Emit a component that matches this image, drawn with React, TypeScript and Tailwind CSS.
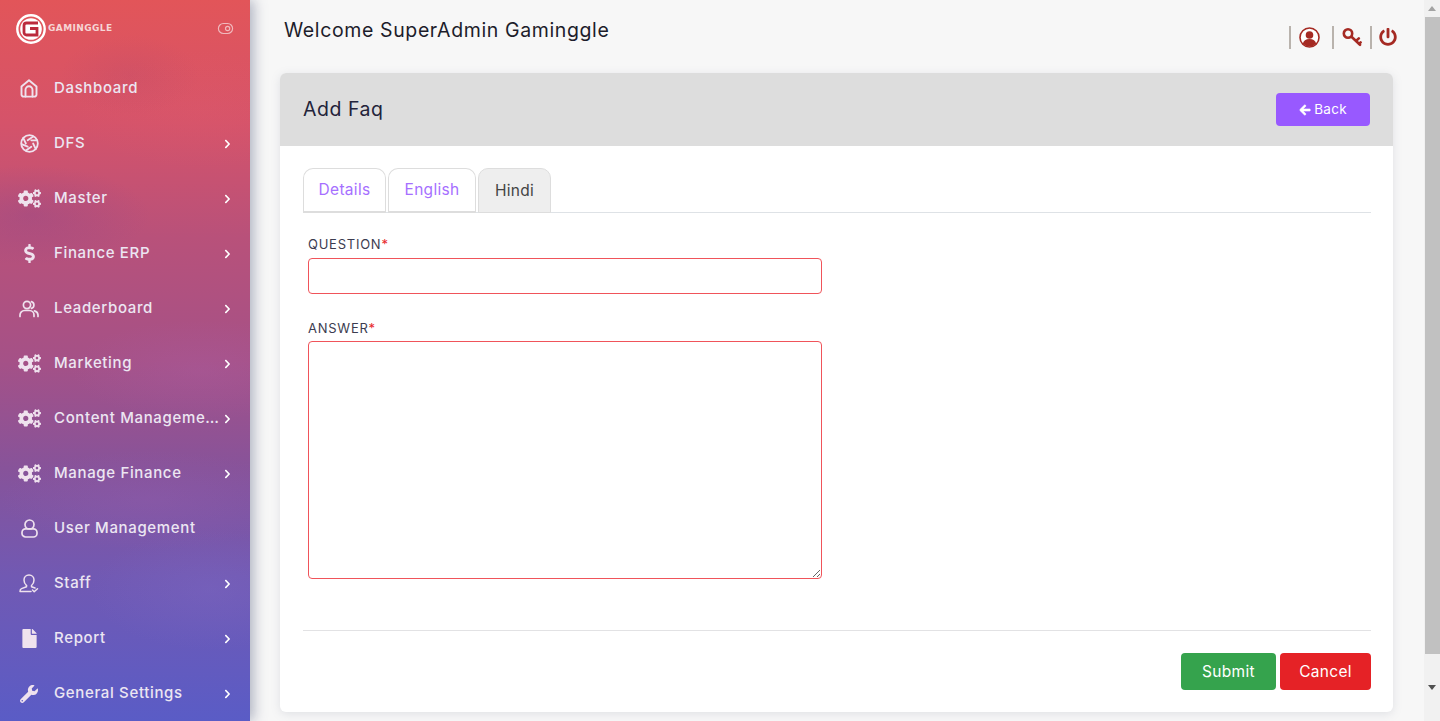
import React from "react";
import { FaCogs, FaDollarSign, FaFile, FaWrench, FaChevronRight, FaPowerOff, FaArrowLeft } from "react-icons/fa";
import { ToggleRight } from "lucide-react";

const Cogs = () => <FaCogs className="w-[23px] h-[23px] shrink-0" />;
const ApertureI = () => (
  <svg width="19" height="19" viewBox="0 0 24 24" fill="none" stroke="currentColor" strokeWidth="2.300" strokeLinecap="round">
    <circle cx="12" cy="12" r="10.500" />
    <path d="M14.300 8h7.100M9.700 8l7.050-4.700M7.400 12 4 5M9.700 16 2.700 13M14.300 16l-6.800 4.700M16.600 12l3.400 7" />
  </svg>
);
const HomeI = () => (
  <svg width="18" height="19" viewBox="0 0 18 19" fill="none" stroke="currentColor" strokeWidth="1.900" strokeLinejoin="round" strokeLinecap="round">
    <path d="M1.500 7.400 9 1.300l7.500 6.100v8a2.200 2.200 0 0 1-2.200 2.200H3.700a2.200 2.200 0 0 1-2.200-2.200z" />
    <path d="M5.500 17.600V10.800a3.500 3.500 0 0 1 7 0v6.800" />
  </svg>
);
const UsersI = () => (
  <svg width="20" height="18" viewBox="0 0 20 18" fill="none" stroke="currentColor" strokeWidth="1.700" strokeLinecap="round">
    <circle cx="8" cy="5" r="3.600" />
    <path d="M1 16.500v-1.500a4.500 4.500 0 0 1 4.500-4.500h5a4.500 4.500 0 0 1 4.500 4.500v1.500" />
    <path d="M12.500 1.600a3.600 3.600 0 0 1 0 6.800M15.500 10.800a4.500 4.500 0 0 1 3.500 4.200v1.500" />
  </svg>
);
const UserI = () => (
  <svg width="17" height="19" viewBox="0 0 17 19" fill="none" stroke="currentColor" strokeWidth="1.700">
    <circle cx="8.500" cy="5.500" r="4.500" />
    <rect x="1" y="9.800" width="15" height="8.200" rx="3.600" />
  </svg>
);
const StaffI = () => (
  <svg width="20" height="19" viewBox="0 0 20 19" fill="none" stroke="currentColor" strokeWidth="1.500" strokeLinecap="round" strokeLinejoin="round">
    <path d="M10 1c3 0 5 2.200 5 5 0 2.600-1.200 4.500-2.500 5.500v1.200l3.500 1.300M7.500 11.500C6.200 10.500 5 8.600 5 6c0-2.800 2-5 5-5" />
    <path d="M7.500 11.500v1.200l-5 1.900c-1 .4-1.500 1.200-1.500 2.900h11" />
    <path d="m13.500 16 1.700 1.700 3.300-3" />
  </svg>
);
const KeyI = () => (
  <svg width="20" height="20" viewBox="0 0 20 20" fill="none" stroke="#a52a23" strokeWidth="2.600" strokeLinecap="round">
    <circle cx="6" cy="6.500" r="4.200" />
    <path d="m9.500 9.800 8.500 8M14 14l2.800-2.600M17 17l1.600-1.600" />
  </svg>
);
const ProfileI = () => (
  <svg width="21" height="21" viewBox="0 0 21 21">
    <circle cx="10.500" cy="10.500" r="9.500" fill="#fff" stroke="#a52a23" strokeWidth="1.600" />
    <circle cx="10.500" cy="8" r="3.800" fill="#a52a23" />
    <path d="M3.800 16.800c.6-3.300 3-4.800 6.700-4.800s6.100 1.500 6.700 4.800a9.500 9.500 0 0 1-13.400 0z" fill="#a52a23" />
  </svg>
);

const Logo = () => (
  <svg width="30" height="30" viewBox="0 0 30 30" className="shrink-0">
    <circle cx="15" cy="15" r="13.700" fill="none" stroke="#fff" strokeWidth="2.400" />
    <circle cx="15" cy="15" r="10.800" fill="#fff" />
    <path d="M22 9H10.500a2.500 2.500 0 0 0-2.500 2.500v7a2.500 2.500 0 0 0 2.500 2.500H21v-6.500h-7" fill="none" stroke="#bb2a3c" strokeWidth="2.800" />
  </svg>
);

const items: { label: string; icon: React.ReactNode; chevron?: boolean }[] = [
  { label: "Dashboard", icon: <HomeI /> },
  { label: "DFS", icon: <ApertureI />, chevron: true },
  { label: "Master", icon: <Cogs />, chevron: true },
  { label: "Finance ERP", icon: <FaDollarSign className="w-[19px] h-[19px]" />, chevron: true },
  { label: "Leaderboard", icon: <UsersI />, chevron: true },
  { label: "Marketing", icon: <Cogs />, chevron: true },
  { label: "Content Manageme…", icon: <Cogs />, chevron: true },
  { label: "Manage Finance", icon: <Cogs />, chevron: true },
  { label: "User Management", icon: <UserI /> },
  { label: "Staff", icon: <StaffI />, chevron: true },
  { label: "Report", icon: <FaFile className="w-[17px] h-[19px]" />, chevron: true },
  { label: "General Settings", icon: <FaWrench className="w-[18px] h-[18px]" />, chevron: true },
];

const Sep = () => <span className="w-[2px] h-[23px] bg-[#b9b3ad] block shrink-0" />;

export default function App() {
  return (
    <div className="flex h-[721px] w-[1440px] overflow-hidden bg-[#f7f7f7] font-['Inter','Liberation_Sans',sans-serif] text-[#2b2b3d]">
      <aside className="relative z-10 w-[250px] h-full shrink-0 flex flex-col bg-[radial-gradient(ellipse_70px_40px_at_130px_75px,rgba(170,70,110,0.18),transparent),radial-gradient(ellipse_130px_60px_at_200px_110px,rgba(235,100,110,0.12),transparent),radial-gradient(ellipse_120px_50px_at_30px_215px,rgba(140,70,140,0.35),transparent),radial-gradient(ellipse_130px_50px_at_200px_370px,rgba(175,95,165,0.3),transparent),radial-gradient(ellipse_150px_50px_at_150px_500px,rgba(150,95,175,0.3),transparent),radial-gradient(ellipse_120px_60px_at_210px_590px,rgba(130,110,200,0.28),transparent),linear-gradient(180deg,#e25559_0%,#d5536a_17%,#b8517a_33%,#a55187_50%,#87539a_65%,#7159b3_80%,#5a5cc6_100%)] shadow-[4px_0_12px_rgba(90,100,130,0.45)] text-[#ece6f2]">
        <div className="h-[66px] pl-[16px] pr-[16px] pb-[4px] flex items-center justify-between">
          <div className="flex items-center gap-[2px]">
            <Logo />
            <span className="text-[9px] font-bold tracking-[0.4px] text-[#f6d5d5] font-['DejaVu_Sans',sans-serif]">GAMINGGLE</span>
          </div>
          <ToggleRight size={17} strokeWidth={1.6} className="text-[#f0b9bd]" />
        </div>
        <nav className="flex flex-col">
          {items.map((it) => (
            <div key={it.label} className="h-[55px] flex items-center pl-[19px] pr-[18px]">
              <span className="w-[20px] h-[20px] flex items-center justify-center text-[#efe2ee] shrink-0">{it.icon}</span>
              <span className="ml-[15px] flex-1 text-[15px] font-medium tracking-[0.65px] whitespace-nowrap">{it.label}</span>
              {it.chevron && <FaChevronRight className="w-[9px] h-[10px] text-white shrink-0" />}
            </div>
          ))}
        </nav>
      </aside>

      <main className="flex-1 min-w-0 pl-[30px] pr-[31px] flex flex-col">
        <header className="h-[73px] shrink-0 flex justify-between">
          <h1 className="pl-[4px] pt-[17px] text-[19.500px] leading-[26px] font-normal text-[#1d1d2b] tracking-[0.62px]">Welcome SuperAdmin Gaminggle</h1>
          <div className="flex items-center pt-[1px] translate-x-[4px] text-[#a52a23]">
            <Sep />
            <span className="ml-[8px]"><ProfileI /></span>
            <span className="ml-[12px]"><Sep /></span>
            <span className="ml-[8px]"><KeyI /></span>
            <span className="ml-[8px]"><Sep /></span>
            <FaPowerOff className="ml-[7px] w-[18px] h-[18px]" />
          </div>
        </header>

        <section className="h-[639px] bg-white rounded-[6px] flex flex-col overflow-hidden shadow-[0_2px_10px_rgba(120,130,150,0.18)]">
          <div className="h-[73px] bg-[#dddddd] flex items-center justify-between pl-[23px] pr-[23px] shrink-0">
            <h2 className="text-[19.500px] font-normal tracking-[0.55px] text-[#23233a]">Add Faq</h2>
            <button className="w-[94px] h-[33px] rounded-[4px] bg-[#9859ff] text-white text-[13.500px] flex items-center justify-center gap-[3px] tracking-[0.3px]">
              <FaArrowLeft className="w-[12px] h-[12px] stroke-[30]" />
              Back
            </button>
          </div>
          <div className="flex-1 flex flex-col pl-[23px] pr-[22px]">
            <div className="mt-[22px] flex gap-[2px] border-b border-[#dee2e6] h-[45px] text-[15.500px] tracking-[0.3px]">
              <div className="w-[83px] h-[45px] rounded-t-[10px] border border-[#ddd] border-b-[2px] bg-white text-[#a66fff] flex items-center justify-center">Details</div>
              <div className="w-[88px] h-[45px] rounded-t-[10px] border border-[#ddd] border-b-[2px] bg-white text-[#a66fff] flex items-center justify-center">English</div>
              <div className="w-[73px] h-[45px] rounded-t-[10px] border border-[#ddd] bg-[#eeeeee] text-[#444] flex items-center justify-center">Hindi</div>
            </div>
            <div className="pl-[5px] w-[519px]">
              <label className="block mt-[23px] h-[22px] text-[13px] leading-[16px] font-normal tracking-[0.75px] text-[#3c3c50]">QUESTION<span className="text-[#e8262b]">*</span></label>
              <input className="block w-[514px] h-[36px] rounded-[4px] border border-[#f0545a] bg-white outline-none" />
              <label className="block mt-[26px] h-[21px] text-[13px] leading-[16px] font-normal tracking-[0.75px] text-[#3c3c50]">ANSWER<span className="text-[#e8262b]">*</span></label>
              <textarea className="block w-[514px] h-[238px] rounded-[4px] border border-[#f0545a] bg-white outline-none" />
            </div>
            <div className="mt-[51px] border-t border-[#e2e2e4] flex justify-end gap-[4px] pt-[22px]">
              <button className="w-[95px] h-[37px] rounded-[4px] bg-[#35a34d] text-white text-[15.500px] tracking-[0.3px]">Submit</button>
              <button className="w-[91px] h-[37px] rounded-[4px] bg-[#e52226] text-white text-[15.500px] tracking-[0.3px]">Cancel</button>
            </div>
          </div>
        </section>
      </main>

      <div className="w-[16px] h-full shrink-0 bg-[#f1f1f1] flex flex-col items-center">
        <div className="h-[17px] flex items-center justify-center"><span className="w-0 h-0 border-x-[4px] border-x-transparent border-b-[5px] border-b-[#a3a3a3]" /></div>
        <div className="w-[15px] h-[637px] ml-[1px] bg-[#c1c1c1]" />
        <div className="flex-1 flex items-center justify-center"><span className="w-0 h-0 border-x-[4px] border-x-transparent border-t-[5px] border-t-[#505050]" /></div>
      </div>
    </div>
  );
}
